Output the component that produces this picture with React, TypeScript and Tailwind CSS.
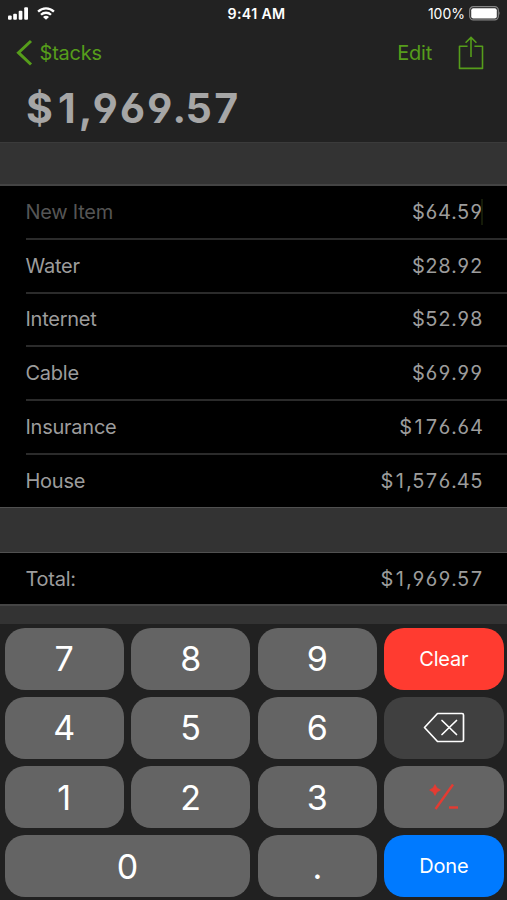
import React from "react";

const items = [
  { name: "New Item", amount: "$64.59", active: true },
  { name: "Water", amount: "$28.92" },
  { name: "Internet", amount: "$52.98" },
  { name: "Cable", amount: "$69.99" },
  { name: "Insurance", amount: "$176.64" },
  { name: "House", amount: "$1,576.45" },
];

const amountClass =
  "text-[20px] tracking-[0.15px] text-[#9c9c9c] [font-feature-settings:'tnum','cv03','cv04']";

// Tabular figures, except that every 1 keeps its footless proportional shape in a cell of digit width.
function Amount({ value }: { value: string }) {
  return (
    <>
      {value.split(/(1)/).map((part, i) =>
        part === "1" ? (
          <span key={i} className="inline-block w-[0.645em] text-center tracking-normal [font-feature-settings:normal]">
            1
          </span>
        ) : (
          part
        ),
      )}
    </>
  );
}

function Key({ children, className = "bg-[#646464] text-[34px] text-white" }: { children: React.ReactNode; className?: string }) {
  return (
    <button className={"flex h-[62.5px] items-center justify-center rounded-[20px] " + className}>
      {children}
    </button>
  );
}

function StatusBar() {
  return (
    <div className="flex h-[28px] items-center justify-between pl-2 pr-[6px] text-[14px] text-white">
      <div className="flex w-[110px] items-center gap-[9px]">
        <svg className="-mt-[1px]" width="20" height="13" viewBox="0 0 20 13" fill="currentColor">
          <rect x="0" y="8.5" width="3.7" height="4.2" rx="1" />
          <rect x="5.2" y="6.7" width="3.7" height="6" rx="1" />
          <rect x="10.7" y="3.7" width="3.7" height="9" rx="1" />
          <rect x="16.2" y="0.2" width="3.8" height="12.5" rx="1" />
        </svg>
        <svg className="-mt-[2px]" width="18" height="13" viewBox="0 0 18 13" fill="none" stroke="currentColor" strokeWidth="2.3">
          <path d="M1.1 4.6a11.3 11.3 0 0 1 15.8 0" />
          <path d="M4 7.8a7.1 7.1 0 0 1 10 0" />
          <path d="M9 12.7 6 9.9a4.2 4.2 0 0 1 6 0Z" fill="currentColor" stroke="none" />
        </svg>
      </div>
      <span className="pl-1 text-[14.2px] font-semibold tracking-[0.35px]">9:41 AM</span>
      <div className="flex w-[110px] items-center justify-end gap-[4px]">
        <span className="-mt-[1px]">100%</span>
        <svg className="-mt-[1px]" width="32" height="15" viewBox="0 0 32 15">
          <rect x="0.7" y="0.7" width="28.6" height="13.2" rx="3.6" fill="none" stroke="#858585" strokeWidth="1.2" />
          <rect x="2.2" y="2.2" width="25.6" height="10.2" rx="2" fill="#fff" />
          <path d="M30.2 5.2q1.6 2.1 0 4.2z" fill="#858585" />
        </svg>
      </div>
    </div>
  );
}

export default function App() {
  return (
    <div className="flex h-[900px] w-[507px] flex-col overflow-hidden bg-[#333333] font-['Inter',sans-serif]">
      <header className="h-[142px] shrink-0 bg-[#222222]">
        <StatusBar />
        <div className="flex h-[49px] items-center pl-4 pr-[23px] text-[20px] tracking-[-0.2px] text-[#569d1b]">
          <svg width="17" height="28" viewBox="0 0 17 28" fill="none" stroke="currentColor" strokeWidth="3">
            <path d="M15 2 2.5 13.7 15 25.5" />
          </svg>
          <span className="ml-[6.5px]">$tacks</span>
          <span className="ml-auto">Edit</span>
          <svg className="ml-[26px]" width="26" height="34" viewBox="0 0 26 34" fill="none" stroke="currentColor" strokeWidth="1.6">
            <path d="M9.6 10.2H1.5v22.2h23V10.2h-8.1" strokeLinejoin="round" />
            <path d="M13 21V1.5M7.6 6.8 13 1.4l5.4 5.4" />
          </svg>
        </div>
        <h1 className="pl-[26px] pt-[4px] text-[41px] font-bold leading-[54px] tracking-[0.8px] text-[#a6a6a6] [font-feature-settings:'tnum','cv03','cv04']">
          <Amount value="$1,969.57" />
        </h1>
      </header>

      <main className="flex flex-col">
        <div className="h-[44px] border-b-2 border-t border-b-[#444444] border-t-[#3b3b3b]" />
        <ul className="bg-black">
          {items.map((item, i) => (
            <li key={item.name} className="pl-[25.5px]">
              <div
                className={
                  "flex items-center justify-between pr-6 " +
                  (i < items.length - 1 ? "h-[53.8px] border-b-2 border-[#2b2b2b]" : "h-[52px]")
                }
              >
                <span className={"text-[20px] tracking-[-0.25px] " + (item.active ? "text-[#555555]" : "text-[#9c9c9c]")}>{item.name}</span>
                <span className="flex items-center">
                  <span className={amountClass}>
                    <Amount value={item.amount} />
                  </span>
                  {item.active && <span className="-ml-[2px] h-[26px] w-[2px] bg-[#151b08]" />}
                </span>
              </div>
            </li>
          ))}
        </ul>
        <div className="h-[46px] border-y border-[#505050]" />
        <div className="flex h-[51.5px] items-center justify-between bg-black pl-[25.5px] pr-6">
          <span className="text-[20px] tracking-[-0.25px] text-[#9c9c9c]">Total:</span>
          <span className={amountClass}>
            <Amount value="$1,969.57" />
          </span>
        </div>
        <div className="h-[19.5px] border-t-2 border-[#454545]" />
      </main>

      <footer className="grid h-[276px] shrink-0 grid-cols-4 content-start gap-x-[7.3px] gap-y-[6.6px] bg-[#212121] pl-[4.5px] pr-[3.5px] pt-[3.6px]">
        <Key>7</Key>
        <Key>8</Key>
        <Key>9</Key>
        <Key className="bg-[#ff3b30] text-[20px] tracking-[-0.2px] text-white">Clear</Key>
        <Key>4</Key>
        <Key>5</Key>
        <Key>6</Key>
        <Key className="bg-[#404040] text-white">
          <svg width="42" height="31" viewBox="0 0 42 31" fill="none" stroke="currentColor" strokeWidth="1.7" strokeLinejoin="round">
            <path d="M14.5 1.5H39q1.5 0 1.5 1.5v25q0 1.5-1.5 1.5H14.5L1.5 15.5z" />
            <path d="m19 8.5 14.5 14M33.5 8.5l-14.5 14" strokeLinecap="round" />
          </svg>
        </Key>
        <Key>1</Key>
        <Key>2</Key>
        <Key>3</Key>
        <Key className="bg-[#646464] text-[#e53b32]">
          <svg width="30" height="28" viewBox="0 0 30 28" fill="none" stroke="currentColor" strokeWidth="2.4">
            <path d="M6.5 26 24 1.5" />
            <path d="M20 24.5h9" />
            <path d="M6 1.5 8 5l3.5 2L8 9l-2 3.5L4 9 .5 7 4 5z" fill="currentColor" stroke="currentColor" strokeWidth="0.6" />
          </svg>
        </Key>
        <Key className="col-span-2 bg-[#646464] text-[34px] text-white">0</Key>
        <Key>.</Key>
        <Key className="bg-[#007aff] text-[20px] tracking-[-0.2px] text-white">Done</Key>
      </footer>
    </div>
  );
}
